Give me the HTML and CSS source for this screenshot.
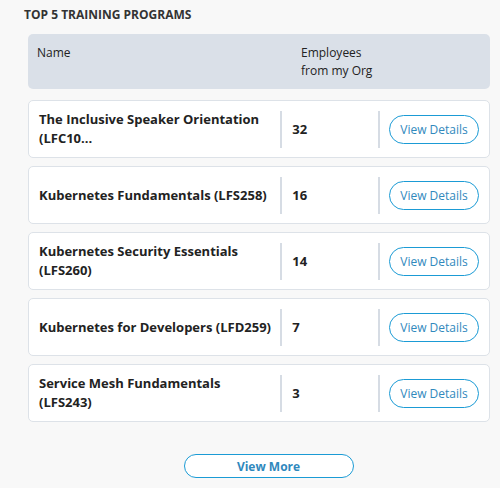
FILE: index.html
```html
<!DOCTYPE html>
<html lang="en">
<head>
    <meta charset="UTF-8">
    <meta name="viewport" content="width=device-width, initial-scale=1.0">
    <title>Top 5 Training Programs</title>
    <link rel="stylesheet" href="styles.css">
</head>
<body>
    <div class="panel">
        <h3 class="panel-title">Top 5 Training Programs</h3>

        <div class="table">
            <div class="table-head">
                <div class="head-name">Name</div>
                <div class="head-count">Employees<br>from my Org</div>
            </div>

            <div class="table-row">
                <div class="cell-name">The Inclusive Speaker Orientation (LFC10...</div>
                <div class="cell-count">32</div>
                <div class="cell-action"><button class="btn-outline">View Details</button></div>
            </div>
            <div class="table-row">
                <div class="cell-name">Kubernetes Fundamentals (LFS258)</div>
                <div class="cell-count">16</div>
                <div class="cell-action"><button class="btn-outline">View Details</button></div>
            </div>
            <div class="table-row">
                <div class="cell-name">Kubernetes Security Essentials (LFS260)</div>
                <div class="cell-count">14</div>
                <div class="cell-action"><button class="btn-outline">View Details</button></div>
            </div>
            <div class="table-row">
                <div class="cell-name">Kubernetes for Developers (LFD259)</div>
                <div class="cell-count">7</div>
                <div class="cell-action"><button class="btn-outline">View Details</button></div>
            </div>
            <div class="table-row">
                <div class="cell-name">Service Mesh Fundamentals (LFS243)</div>
                <div class="cell-count">3</div>
                <div class="cell-action"><button class="btn-outline">View Details</button></div>
            </div>
        </div>

        <div class="more">
            <button class="btn-more">View More</button>
        </div>
    </div>
</body>
</html>
```

FILE: styles.css
```css
* {
    margin: 0;
    padding: 0;
    box-sizing: border-box;
}

body {
    font-family: 'Open Sans', 'Liberation Sans', sans-serif;
    background: #f8f8f8;
    color: #222;
}

.panel {
    padding: 7px 10px 0 28px;
}

.panel-title {
    font-size: 12px;
    line-height: 16px;
    font-weight: 700;
    text-transform: uppercase;
    color: #333;
    margin-left: -4px;
    margin-bottom: 11px;
}

.table-head {
    display: flex;
    height: 55px;
    padding: 10px 9px;
    background: #dae0e8;
    border-radius: 5px;
    font-size: 12px;
    line-height: 18px;
    color: #222;
    margin-bottom: 11px;
}

.head-name {
    width: 264px;
}

.table-row {
    display: flex;
    align-items: center;
    height: 58px;
    padding: 0 10px;
    margin-bottom: 8px;
    background: #fff;
    border: 1px solid #dde2e8;
    border-radius: 5px;
}

.cell-name {
    width: 242px;
    padding-right: 4px;
    font-size: 13px;
    font-weight: 700;
    line-height: 19px;
    color: #222;
}

.cell-count,
.cell-action {
    display: flex;
    align-items: center;
    height: 37px;
    border-left: 2px solid #d6dce4;
}

.cell-count {
    width: 98px;
    padding-left: 10px;
    font-size: 13px;
    font-weight: 700;
}

.cell-action {
    padding-left: 9px;
}

.btn-outline {
    width: 90px;
    height: 29px;
    background: #fff;
    border: 1px solid #1b9bd5;
    border-radius: 15px;
    font-family: inherit;
    font-size: 12px;
    color: #3189bd;
    cursor: pointer;
}

.more {
    display: flex;
    justify-content: center;
    padding-top: 24px;
    padding-left: 19px;
}

.btn-more {
    width: 170px;
    height: 24px;
    background: #fff;
    border: 1px solid #1b9bd5;
    border-radius: 12px;
    font-family: inherit;
    font-size: 12px;
    font-weight: 700;
    color: #2f88bd;
    cursor: pointer;
}
```
